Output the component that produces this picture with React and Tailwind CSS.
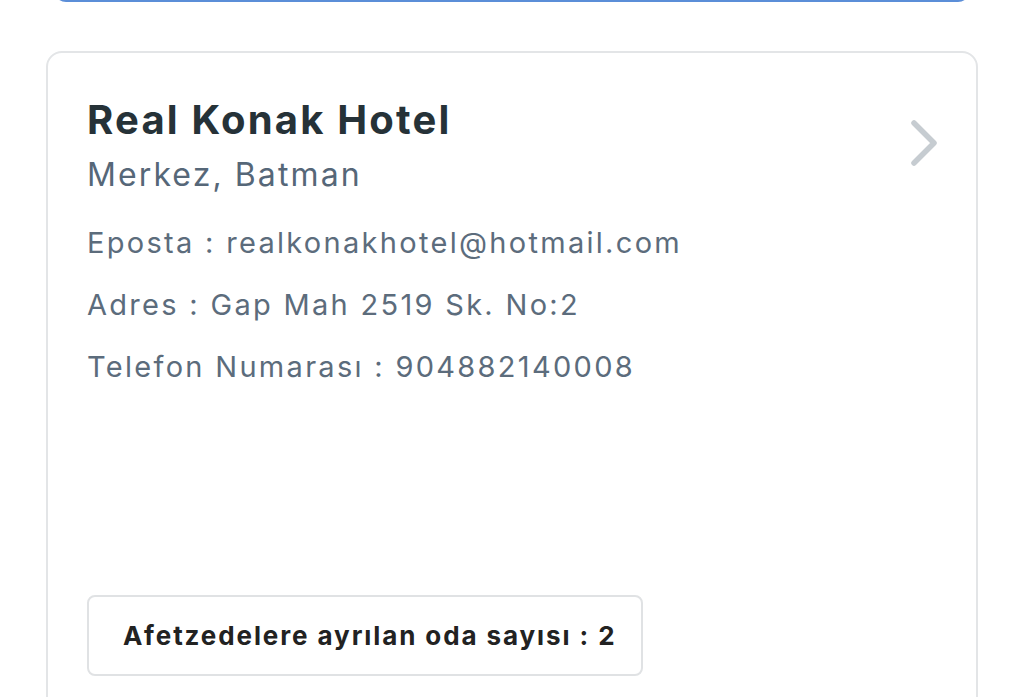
import React from 'react';

const infoLines = [
    'Eposta : realkonakhotel@hotmail.com',
    'Adres : Gap Mah 2519 Sk. No:2',
    'Telefon Numarası : 904882140008',
];

const App = () => {
    return (
        <div className="min-h-screen bg-white overflow-hidden" style={{ fontFamily: 'Inter, "Noto Sans", sans-serif' }}>
            {/* Arama kutusu (ustte kesilmis) */}
            <div className="mx-[54px] -mt-[58px] h-[60px] rounded-xl border-2 border-[#5b8ed8]" />

            {/* Otel karti */}
            <div className="mx-[46px] mt-[49px] h-[700px] rounded-2xl border-2 border-[#e3e5e7] px-[39px] pt-[43px]">
                <div className="flex items-start justify-between">
                    <div>
                        <h2 className="text-[40px] leading-[48px] font-bold tracking-[2.2px] text-[#263238]">Real Konak Hotel</h2>
                        <p className="mt-[11px] text-[32px] leading-[40px] tracking-[2.1px] text-[#566778]">Merkez, Batman</p>
                    </div>
                    <svg width="36" height="52" viewBox="0 0 36 52" className="mt-[21px] -mr-[7px]" fill="none">
                        <path d="M6 6 L26 26 L6 46" stroke="#c6ccd1" strokeWidth="5.5" strokeLinecap="round" strokeLinejoin="round" />
                    </svg>
                </div>

                <div className="mt-[28px] flex flex-col gap-[22px]">
                    {infoLines.map((line) => (
                        <p key={line} className="text-[29px] leading-[40px] tracking-[2.3px] text-[#5c6c7c]">{line}</p>
                    ))}
                </div>

                <div className="mt-[208px] inline-flex h-[81px] w-[556px] items-center rounded-lg border-2 border-[#e0e2e4] pl-[34px]">
                    <span className="text-[26px] font-bold tracking-[1.9px] text-[#222222]">Afetzedelere ayrılan oda sayısı : 2</span>
                </div>
            </div>
        </div>
    );
};

export default App;
